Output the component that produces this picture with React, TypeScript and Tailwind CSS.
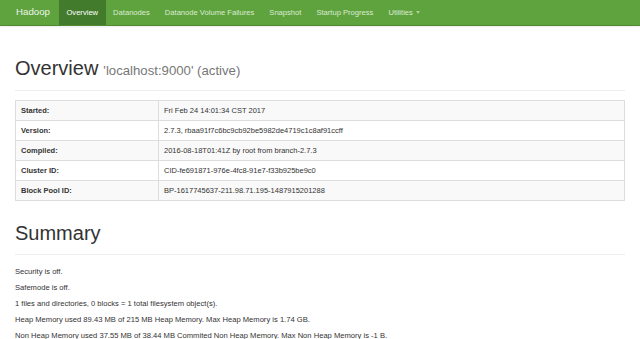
import React from 'react';

const navItems = ['Datanodes', 'Datanode Volume Failures', 'Snapshot', 'Startup Progress'];

const rows: [string, string][] = [
  ['Started:', 'Fri Feb 24 14:01:34 CST 2017'],
  ['Version:', '2.7.3, rbaa91f7c6bc9cb92be5982de4719c1c8af91ccff'],
  ['Compiled:', '2016-08-18T01:41Z by root from branch-2.7.3'],
  ['Cluster ID:', 'CID-fe691871-976e-4fc8-91e7-f33b925be9c0'],
  ['Block Pool ID:', 'BP-1617745637-211.98.71.195-1487915201288'],
];

const summary = [
  'Security is off.',
  'Safemode is off.',
  '1 files and directories, 0 blocks = 1 total filesystem object(s).',
  'Heap Memory used 89.43 MB of 215 MB Heap Memory. Max Heap Memory is 1.74 GB.',
  'Non Heap Memory used 37.55 MB of 38.44 MB Commited Non Heap Memory. Max Non Heap Memory is -1 B.',
];

export default function App() {
  return (
    <div className="w-[640px] h-[339px] overflow-hidden bg-white text-[#333]" style={{ fontFamily: '"Liberation Sans", Arial, sans-serif' }}>
      {/* Navbar */}
      <nav className="h-[26px] bg-[#5fa33e] border-b border-[#4f8a33] flex items-stretch shadow-[0_1px_2px_rgba(0,0,0,0.08)]">
        <div className="pl-[16px] pr-[9px] flex items-center text-[9.7px] text-[#eef5ea]">Hadoop</div>
        <div className="px-[7.5px] flex items-center bg-[#427b2c] text-white text-[7.6px]">Overview</div>
        {navItems.map((n) => (
          <div key={n} className="px-[7.5px] flex items-center text-[7.6px] text-[#dcebd3]">{n}</div>
        ))}
        <div className="px-[7.5px] flex items-center gap-[3px] text-[7.6px] text-[#dcebd3]">
          Utilities
          <span className="w-0 h-0 border-l-[2.5px] border-r-[2.5px] border-t-[3px] border-l-transparent border-r-transparent border-t-[#a9cf97]" />
        </div>
      </nav>

      <div className="px-[15px]">
        {/* Overview header */}
        <div className="mt-[31px] pb-[9px] border-b border-[#eeeeee] flex items-baseline gap-[5px]">
          <h1 className="text-[20px] leading-[22px] text-[#333]">Overview</h1>
          <span className="text-[13.2px] text-[#777]">'localhost:9000' (active)</span>
        </div>

        {/* Info table */}
        <table className="mt-[9px] w-full border-collapse border border-[#dddddd] text-[7.5px]">
          <tbody>
            {rows.map(([k, v], i) => (
              <tr key={k} className={i % 2 === 0 ? 'bg-[#f9f9f9]' : 'bg-white'}>
                <th className="w-[143px] h-[20px] px-[5px] text-left font-bold border border-[#dddddd]">{k}</th>
                <td className="h-[20px] px-[5px] border border-[#dddddd]">{v}</td>
              </tr>
            ))}
          </tbody>
        </table>

        {/* Summary header */}
        <div className="mt-[21px] pb-[10px] border-b border-[#eeeeee]">
          <h1 className="text-[20px] leading-[22px] text-[#333]">Summary</h1>
        </div>

        <div className="mt-[9px] text-[7.6px]">
          {summary.map((s) => (
            <p key={s} className="leading-[16px]">{s}</p>
          ))}
        </div>
      </div>
    </div>
  );
}
